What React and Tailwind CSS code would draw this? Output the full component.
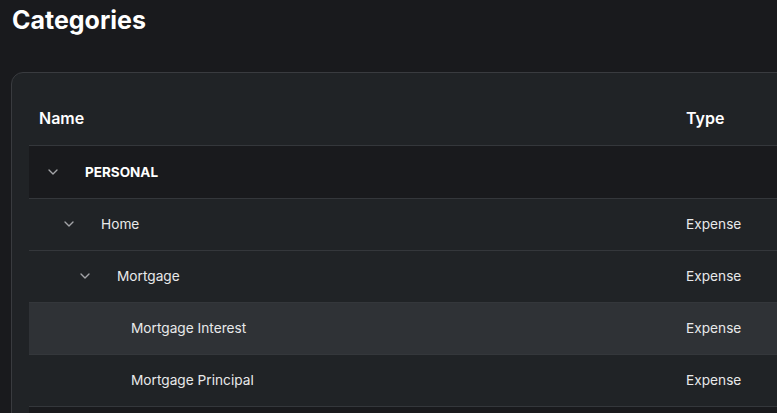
import React from 'react';
import { ChevronDown } from 'lucide-react';

const rows = [
  { name: 'PERSONAL', level: 0, group: true, open: true, type: '' },
  { name: 'Home', level: 1, open: true, type: 'Expense' },
  { name: 'Mortgage', level: 2, open: true, type: 'Expense' },
  { name: 'Mortgage Interest', level: 3, type: 'Expense', hover: true },
  { name: 'Mortgage Principal', level: 3, type: 'Expense' },
  { name: '', level: 0, group: true, type: '' },
];

const indents = ['pl-[10px]', 'pl-[26px]', 'pl-[42px]', 'pl-[58px]'];

const Row = ({ row, first }) => {
  const bg = row.group ? 'bg-[#191a1d]' : row.hover ? 'bg-[#2f3236]' : '';
  return (
    <div className={`flex items-center border-b border-[#34373b] ${first ? 'h-[53px]' : 'h-[52px]'} ${bg}`}>
      <div className={`w-[647px] flex items-center ${indents[row.level]}`}>
        {row.open !== undefined || !row.name ? (
          <div className="w-7 flex justify-center text-[#a3a5a8]">
            {row.open && <ChevronDown size={16} strokeWidth={2} />}
          </div>
        ) : (
          <div className="w-7" />
        )}
        <span
          className={
            row.group
              ? 'ml-[18px] text-[13.5px] font-bold text-white'
              : row.open
              ? 'ml-[18px] text-[13.7px] text-[#e8e9ea]'
              : 'ml-[16px] text-[13.7px] text-[#e8e9ea]'
          }
        >
          {row.name}
        </span>
      </div>
      <div className="pl-[10px] text-[13.7px] text-[#e8e9ea]">{row.type}</div>
    </div>
  );
};

export default function App() {
  return (
    <div className="w-[777px] h-[413px] overflow-hidden bg-[#191a1d] px-[11px] pt-[4px] font-['Inter',sans-serif]">
      <h1 className="text-[25px] leading-8 font-bold text-white pl-[1px]">Categories</h1>
      <div className="mt-[36px] w-[820px] rounded-tl-xl border border-[#393b3f] bg-[#202326] pt-[18px] pl-[17px]">
        <div className="flex items-center h-[55px] border-b border-[#34373b]">
          <div className="w-[647px] pl-[10px] text-[16px] font-semibold text-white">Name</div>
          <div className="pl-[10px] text-[16px] font-semibold text-white">Type</div>
        </div>
        {rows.map((r, i) => (
          <Row key={i} row={r} first={i === 0} />
        ))}
      </div>
    </div>
  );
}
